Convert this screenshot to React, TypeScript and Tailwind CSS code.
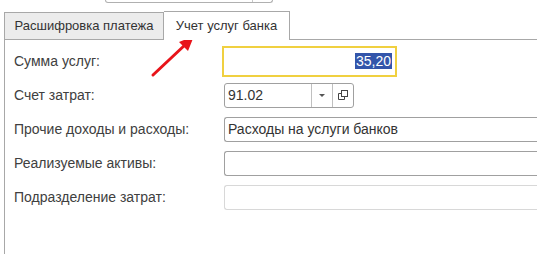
// ── Field row ────────────────────────────────────────────────────────────────

interface RowProps {
  label: string;
  children: React.ReactNode;
}

function Row({ label, children }: RowProps) {
  return (
    <div className="flex items-center h-[34px]">
      <div className="w-[217px] shrink-0 pl-[9px] text-[14px] text-[#404040]">{label}</div>
      {children}
    </div>
  );
}

function OpenIcon() {
  return (
    <svg width="11" height="11" viewBox="0 0 11 11" fill="none" stroke="#444" strokeWidth="1">
      <rect x="3.5" y="0.5" width="6" height="6" />
      <path d="M3.5 3.5H0.5V9.5H6.5V6.5" />
    </svg>
  );
}

function Arrow() {
  return (
    <svg
      className="absolute left-[148px] top-[32px]"
      width="50"
      height="48"
      viewBox="0 0 50 48"
    >
      <path d="M5 43L38 12" stroke="#e8141a" strokeWidth="3" strokeLinecap="round" />
      <path d="M46 4L31 10L40 19Z" fill="#e8141a" />
    </svg>
  );
}

// ── App ──────────────────────────────────────────────────────────────────────

export default function App() {
  return (
    <div
      className="relative w-[537px] h-[254px] bg-white overflow-hidden"
      style={{ fontFamily: '"Liberation Sans", Arial, sans-serif' }}
    >
      {/* partial field above */}
      <div className="flex pl-[105px]">
        <div className="flex w-[168px] h-[3px] border-x border-b border-[#b0b0b0] rounded-b-[3px]">
          <div className="w-[147px] border-r border-[#c8c8c8]" />
        </div>
      </div>

      {/* tabs */}
      <div className="flex items-end pl-[4px] mt-[8px] h-[28px]">
        <div className="w-[160px] h-[27px] bg-[#ececec] border border-b-0 border-[#a8a8a8] flex items-center justify-center text-[13px] text-[#333]">
          Расшифровка платежа
        </div>
        <div className="relative z-10 w-[126px] h-[29px] -mb-px bg-white border border-b-0 border-l-0 border-[#a8a8a8] flex items-center justify-center text-[13px] text-[#333]">
          Учет услуг банка
        </div>
      </div>

      {/* panel */}
      <div className="ml-[4px] h-[220px] border-t border-l border-[#a8a8a8] pt-[4px]">
        <Row label="Сумма услуг:">
          <div className="w-[175px] h-[31px] border-2 border-[#f0d040] flex items-center justify-end pr-[3px]">
            <span className="bg-[#3355aa] text-white text-[14px] leading-[16px] px-px">35,20</span>
          </div>
        </Row>
        <Row label="Счет затрат:">
          <div className="ml-[2px] w-[130px] h-[25px] border border-[#a0a0a0] rounded-[3px] flex text-[14px] text-[#333]">
            <div className="flex-1 flex items-center pl-[3px]">91.02</div>
            <div className="w-[21px] border-l border-[#c0c0c0] flex items-center justify-center">
              <div className="w-0 h-0 border-x-[3px] border-x-transparent border-t-[3px] border-t-[#555]" />
            </div>
            <div className="w-[21px] border-l border-[#c0c0c0] flex items-center justify-center">
              <OpenIcon />
            </div>
          </div>
        </Row>
        <Row label="Прочие доходы и расходы:">
          <div className="ml-[2px] flex-1 h-[25px] border border-[#a0a0a0] border-r-0 rounded-l-[3px] flex items-center pl-[3px] text-[14px] text-[#333]">
            Расходы на услуги банков
          </div>
        </Row>
        <Row label="Реализуемые активы:">
          <div className="ml-[2px] flex-1 h-[25px] border border-[#a0a0a0] border-r-0 rounded-l-[3px]" />
        </Row>
        <Row label="Подразделение затрат:">
          <div className="ml-[2px] flex-1 h-[25px] border border-[#d8d8d8] border-r-0 rounded-l-[3px]" />
        </Row>
      </div>

      <Arrow />
    </div>
  );
}
